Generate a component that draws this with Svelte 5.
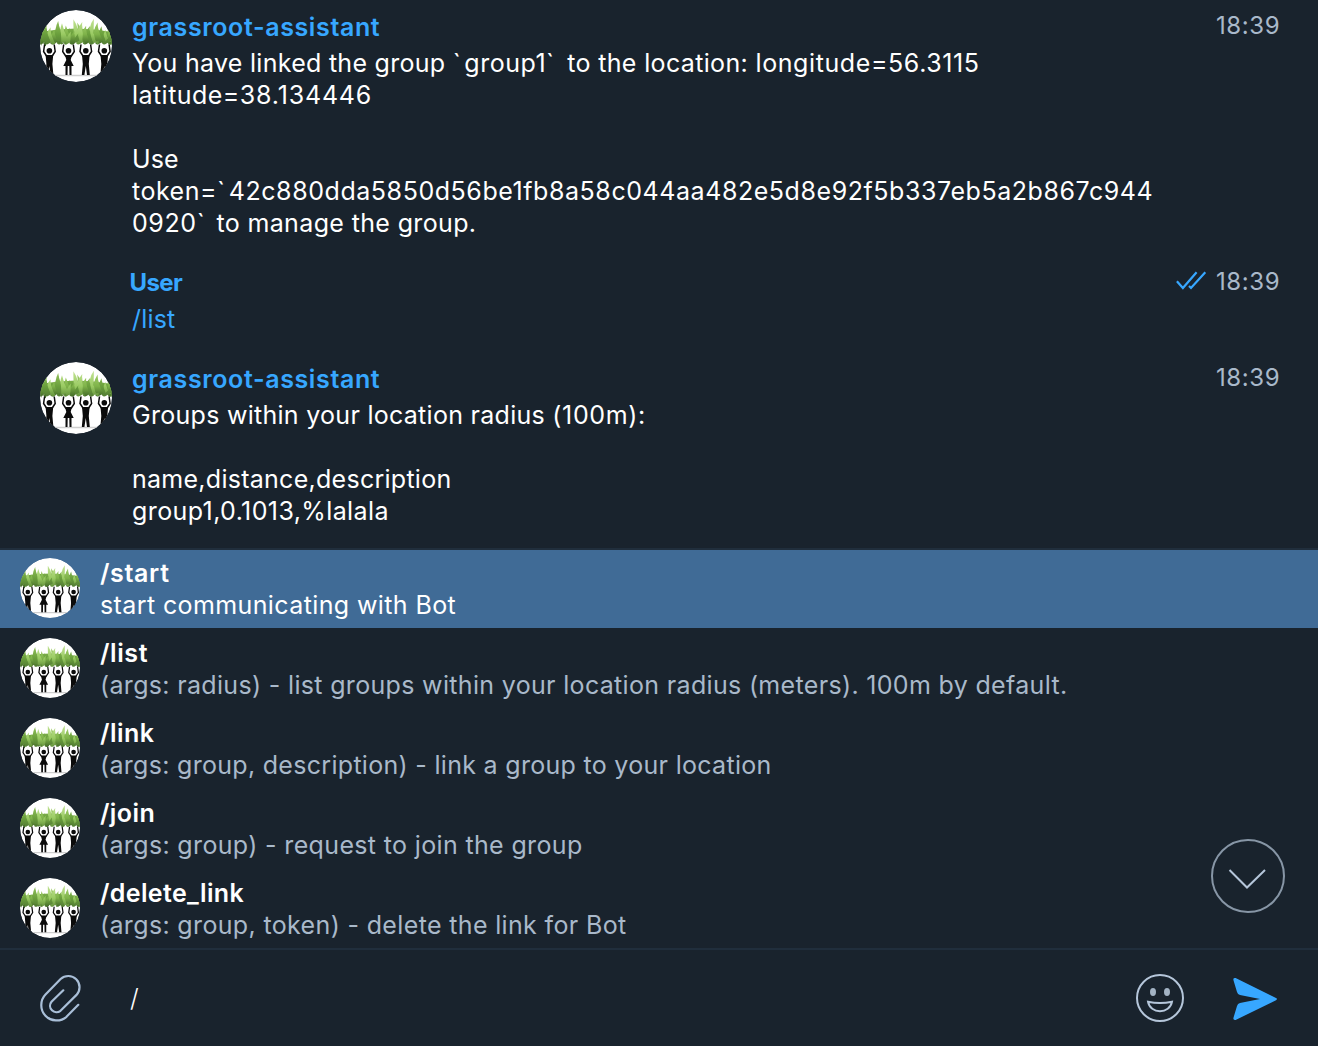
<script>
  const commands = [
    { name: '/start', text: 'start communicating with Bot', track: 0.65, spread: 0.39 },
    { name: '/list', text: '(args: radius) - list groups within your location radius (meters). 100m by default.', track: 0.6, spread: 0.33 },
    { name: '/link', text: '(args: group, description) - link a group to your location', track: 0.5, spread: 0.3 },
    { name: '/join', text: '(args: group) - request to join the group', track: 0.4, spread: 0.35 },
    { name: '/delete_link', text: '(args: group, token) - delete the link for Bot', track: 0.36, spread: 0.35 }
  ];

  // Each line is a list of [text, tracking in px] runs.
  const linked = [
    [['You have linked the group ', 0.28], ['`', 3.5], ['group1', 0.5], ['` ', 3], ['to the location: ', 0.35], ['longitude=56.3115', 0.6]],
    [['latitude=', 0.45], ['38.134446', 0.83]],
    [],
    [['Use', 0.1]],
    [['token=', 0.5], ['`', 3.7], ['42c880dda5850d56be1fb8a58c044aa482e5d8e92f5b337eb5a2b867c944', 0.56]],
    [['0920', 0.6], ['` ', 2.3], ['to manage the group.', 0.36]]
  ];
  const groups = [
    [['Groups within your location radius ', 0.28], ['(100m):', 0.65]],
    [],
    [['name,distance,description', 0.27]],
    [['group1,0.1013,%lalala', 0.4]]
  ];

  // Grass: long blades at the back, shorter ones in front; highest in the middle.
  const blades = [];
  for (let row = 0; row < 4; row++) {
    for (let i = 0; i < 16; i++) {
      const k = i * 7 + row * 5;
      const x = i * 4.8 + row * 1.9 - 2;
      const dome = Math.abs(x - 38) * 0.14;
      const top = 7 + dome + row * 4 + ((k * 13) % 11);
      const lean = ((k * 5) % 9) - 4;
      const base = 30.5 + ((k * 3) % 4);
      blades.push({
        d: `M${x - 2} ${base}Q${x - 3.2} ${top + 8} ${x + lean} ${top}Q${x + 3.2} ${top + 9} ${x + 2} ${base}Q${x} ${base + 2} ${x - 2} ${base}Z`,
        fill: `url(#blade${(k + row) % 3})`
      });
    }
  }

  const people = [
    { x: 9.4, skirt: false },
    { x: 28.5, skirt: true },
    { x: 45.8, skirt: false },
    { x: 64.3, skirt: false }
  ];
</script>

{#snippet avatar()}
  <svg class="avatar" viewBox="0 0 72 72" aria-hidden="true">
    <circle cx="36" cy="36" r="36" fill="#fff" />
    <path d="M0 22Q36 15 72 22V32H0Z" fill="url(#blade1)" />
    {#each blades as blade}
      <path d={blade.d} fill={blade.fill} />
    {/each}
    <path d="M12 65.500H62" stroke="#cfcfcf" stroke-width="1.6" />
    {#each people as person}
      <g class="person" transform="translate({person.x} 0)">
        <circle cy="40.8" r="2.800" />
        <path class="arms" d="M-4.800 34.500L-5.800 41.500L-2.500 46.500M4.800 34.500L5.800 41.500L2.500 46.500" />
        {#if person.skirt}
          <path d="M-3.500 45H3.500L2.200 50L5.200 56H-5.200L-2.200 50ZM-3 56H-.8L-1 65H-3ZM.8 56H3L3 65H1Z" />
        {:else}
          <path d="M-3.800 45H3.800L3 54L4 65H1.200L0 56L-1.400 65H-4L-3 54Z" />
        {/if}
      </g>
    {/each}
  </svg>
{/snippet}

{#snippet lines(rows)}
  {#each rows as row}
    <p>{#each row as [text, tracking]}<span style:letter-spacing="{tracking}px">{text}</span>{/each}</p>
  {/each}
{/snippet}

<svg class="defs" aria-hidden="true">
  <defs>
    {#each [['#b4dc7c', '#7fb34a', '#456e29'], ['#a2cf68', '#6a9f3c', '#557f35'], ['#cbe89f', '#9acb63', '#65943d']] as [tip, middle, root], i}
      <linearGradient id="blade{i}" x1="0" y1="6" x2="0" y2="34" gradientUnits="userSpaceOnUse">
        <stop offset="0" stop-color={tip} /><stop offset=".65" stop-color={middle} /><stop offset="1" stop-color={root} />
      </linearGradient>
    {/each}
  </defs>
</svg>

<main class="app">
  <section class="messages">
    <article class="message first">
      {@render avatar()}
      <div class="body">
        <h2>grassroot-assistant</h2>
        {@render lines(linked)}
      </div>
      <time>18:39</time>
    </article>
    <article class="message own">
      <div class="body">
        <h2>User</h2>
        <p class="link">/list</p>
      </div>
      <svg class="ticks" viewBox="0 0 32 24" aria-hidden="true">
        <path d="M.9 11.300L6.900 18L20.600 2.200M13 16L15 18L29.300 2.200" />
      </svg>
      <time>18:39</time>
    </article>
    <article class="message">
      {@render avatar()}
      <div class="body">
        <h2>grassroot-assistant</h2>
        {@render lines(groups)}
      </div>
      <time>18:39</time>
    </article>
  </section>

  <section class="commands">
    {#each commands as command, i}
      <div class="command" class:selected={i === 0}>
        {@render avatar()}
        <div class="label">
          <h3 style:letter-spacing="{command.track}px">{command.name}</h3>
          <p style:letter-spacing="{command.spread}px">{command.text}</p>
        </div>
      </div>
    {/each}
    <button class="down" aria-label="Scroll down">
      <svg viewBox="0 0 74 74"><circle cx="37" cy="37" r="36" /><path d="M18.500 31L36 48.500L54 31" /></svg>
    </button>
  </section>

  <footer>
    <svg class="clip" viewBox="0 0 48 56" aria-hidden="true">
      <path d="M25.300 19.300L13.500 30.800A6.400 6.400 0 0 0 22.500 39.800L38.500 23.900A11.250 11.250 0 0 0 22.600 8L7.500 23.600A15.300 15.300 0 0 0 28.500 45.800L40.300 33.800" />
    </svg>
    <span class="typed">/</span>
    <svg class="smile" viewBox="0 0 48 48" aria-hidden="true">
      <circle cx="24" cy="24" r="23" />
      <ellipse class="eye" cx="17" cy="18" rx="3" ry="4" /><ellipse class="eye" cx="31" cy="18" rx="3" ry="4" />
      <path d="M12 27.700Q24 30.500 36 27.700C34 40.300 14 40.300 12 27.700Z" />
    </svg>
    <svg class="send" viewBox="0 0 46 44" aria-hidden="true">
      <path d="M3.600 1L44 21Q46 22 44 23.300L3.600 43Q1 43.500 1.400 41L5 29Q5.600 26.500 8 26L28 22L8 18Q5.600 17.500 5 15L1.400 3Q1 .5 3.600 1Z" />
    </svg>
  </footer>
</main>

<style>
  :global(body) { margin: 0; background: #19232d; }
  .defs { position: absolute; width: 0; height: 0; }
  .app { width: 1318px; height: 1046px; overflow: hidden; background: #19232d; color: #fff; font: 400 25px/32px Inter, sans-serif; }
  h2, h3, p { margin: 0; white-space: pre; }
  h2 { font-size: 25px; line-height: 34px; font-weight: 600; letter-spacing: 0.62px; color: #37a7ff; }
  h3 { font-size: 25px; line-height: 32px; font-weight: 600; }
  p { height: 32px; }
  .messages { height: 548px; box-sizing: border-box; padding: 10px 38px 0 40px; }
  .message { display: flex; align-items: flex-start; height: 96px; }
  .message.first { height: 256px; }
  .avatar { flex: none; width: 72px; height: 72px; border-radius: 50%; }
  .person { fill: #0b0b0b; }
  .arms { fill: none; stroke: #0b0b0b; stroke-width: 1.5; }
  .body { flex: 1; margin-left: 20px; }
  .body h2 { height: 37px; }
  .own .body { margin-left: 92px; }
  .own h2 { margin-left: -2.5px; font-size: 24px; font-weight: 700; letter-spacing: -0.6px; }
  .link { color: #37a7ff; letter-spacing: 0.2px; }
  time { width: 64px; font-size: 24px; letter-spacing: 0.6px; color: #a9b9ca; }
  .ticks { width: 32px; height: 24px; margin: 4px 8px 0 0; fill: none; stroke: #37a7ff; stroke-width: 2.2; }
  .commands { position: relative; height: 400px; box-sizing: border-box; border-top: 2px solid #202e3c; }
  .command { display: flex; height: 80px; box-sizing: border-box; padding: 10px 20px; }
  .command.selected { height: 78px; padding-top: 8px; background: #406b96; }
  .command .avatar { width: 60px; height: 60px; margin-right: 20px; }
  .label { margin-top: -1px; }
  .command p { color: #a9b9ca; }
  .command.selected p { color: #fff; }
  .down { position: absolute; right: 33px; bottom: 35px; width: 74px; height: 74px; padding: 0; border: 0; background: none; }
  .down svg { display: block; fill: none; stroke: #8796a6; stroke-width: 2; }
  .down path { stroke: #b5c6da; }
  footer { display: flex; align-items: center; height: 98px; box-sizing: border-box; border-top: 2px solid #202e3c; padding: 0 40px 0 38px; }
  .clip { width: 48px; height: 56px; margin-top: 1px; fill: none; stroke: #a9bfd8; stroke-width: 2.2; stroke-linecap: round; }
  .typed { flex: 1; margin: 0 0 0 44px; font-weight: 300; }
  .smile { width: 48px; height: 48px; margin-right: 48px; fill: none; stroke: #b5c6da; stroke-width: 2; }
  .eye { fill: #a3b3c4; stroke: none; }
  .send { width: 46px; height: 44px; margin-top: 2px; fill: #37a7ff; }
</style>
